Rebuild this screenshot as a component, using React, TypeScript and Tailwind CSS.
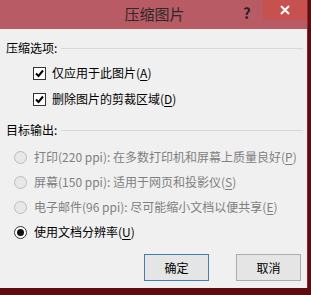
import type { ReactNode } from "react";

const font = { fontFamily: '"Noto Sans CJK SC", "Noto Sans", sans-serif' };

function Key({ k }: { k: string }) {
    return (
        <>
            (<span className="underline underline-offset-2">{k}</span>)
        </>
    );
}

function GroupTitle({ children }: { children: ReactNode }) {
    return (
        <div className="flex items-center h-4 pl-[6px] pr-[4px]">
            <span className="text-[12px] leading-4 text-black">{children}</span>
            <div className="flex-1 ml-[4px] h-px bg-[#d9d9d9]" />
        </div>
    );
}

function Check({ children }: { children: ReactNode }) {
    return (
        <div className="flex items-center h-4 pl-[33px]">
            <div className="w-[13px] h-[13px] border border-[#333] bg-white flex items-center justify-center">
                <svg width="9" height="9" viewBox="0 0 9 9">
                    <path d="M1 4.5 L3.5 7 L8 1.5" stroke="#000" strokeWidth="2" fill="none" />
                </svg>
            </div>
            <span className="ml-[6px] text-[12px] leading-4 text-black">{children}</span>
        </div>
    );
}

function Radio({ children, disabled, checked }: { children: ReactNode; disabled?: boolean; checked?: boolean }) {
    return (
        <div className="flex items-center h-4 pl-[14px]">
            <div
                className={`w-[13px] h-[13px] rounded-full border flex items-center justify-center ${
                    disabled ? "border-[#bcbcbc] bg-[#e8e8e8]" : "border-[#333] bg-white"
                }`}
            >
                {checked && <div className="w-[7px] h-[7px] rounded-full bg-[#111]" />}
            </div>
            <span className={`ml-[7px] text-[12px] leading-4 ${disabled ? "text-[#808080]" : "text-black"}`}>
                {children}
            </span>
        </div>
    );
}

export default function App() {
    return (
        <div className="w-[311px] h-[295px] bg-[#5e0c10] flex flex-col overflow-hidden" style={font}>
            <div className="w-[308px] h-[288px] flex flex-col bg-[#f0f0f0] border-r border-[#8a2a30]">
                {/* title bar */}
                <div className="h-[29px] bg-[#b95b64] flex items-center relative">
                    <span className="flex-1 text-center text-[15px] text-[#2a2a2a] pl-[2px]">压缩图片</span>
                    <span className="absolute left-[243px] top-[2px] text-[15px] font-bold text-[#222]">?</span>
                    <div className="absolute right-0 top-0 w-[44px] h-[20px] bg-[#c7514f] flex items-center justify-center">
                        <svg width="10" height="10" viewBox="0 0 10 10">
                            <path d="M1 1 L9 9 M9 1 L1 9" stroke="#fff" strokeWidth="2" />
                        </svg>
                    </div>
                </div>

                <div className="flex flex-col pt-[11px]">
                    <GroupTitle>压缩选项:</GroupTitle>
                    <div className="mt-[9px] flex flex-col gap-[10px]">
                        <Check>
                            仅应用于此图片<Key k="A" />
                        </Check>
                        <Check>
                            删除图片的剪裁区域<Key k="D" />
                        </Check>
                    </div>

                    <div className="mt-[15px]">
                        <GroupTitle>目标输出:</GroupTitle>
                    </div>
                    <div className="mt-[11px] flex flex-col gap-[9px]">
                        <Radio disabled>
                            打印(220 ppi): 在多数打印机和屏幕上质量良好<Key k="P" />
                        </Radio>
                        <Radio disabled>
                            屏幕(150 ppi): 适用于网页和投影仪<Key k="S" />
                        </Radio>
                        <Radio disabled>
                            电子邮件(96 ppi): 尽可能缩小文档以便共享<Key k="E" />
                        </Radio>
                        <Radio checked>
                            使用文档分辨率<Key k="U" />
                        </Radio>
                    </div>

                    <div className="mt-[14px] flex justify-end pr-[6px] gap-[27px]">
                        <button className="w-[65px] h-[27px] border border-[#3c7fb1] bg-[#e5e5e5] text-[12px] text-black">
                            确定
                        </button>
                        <button className="w-[65px] h-[27px] border border-[#acacac] bg-[#e5e5e5] text-[12px] text-black">
                            取消
                        </button>
                    </div>
                </div>
            </div>
        </div>
    );
}
